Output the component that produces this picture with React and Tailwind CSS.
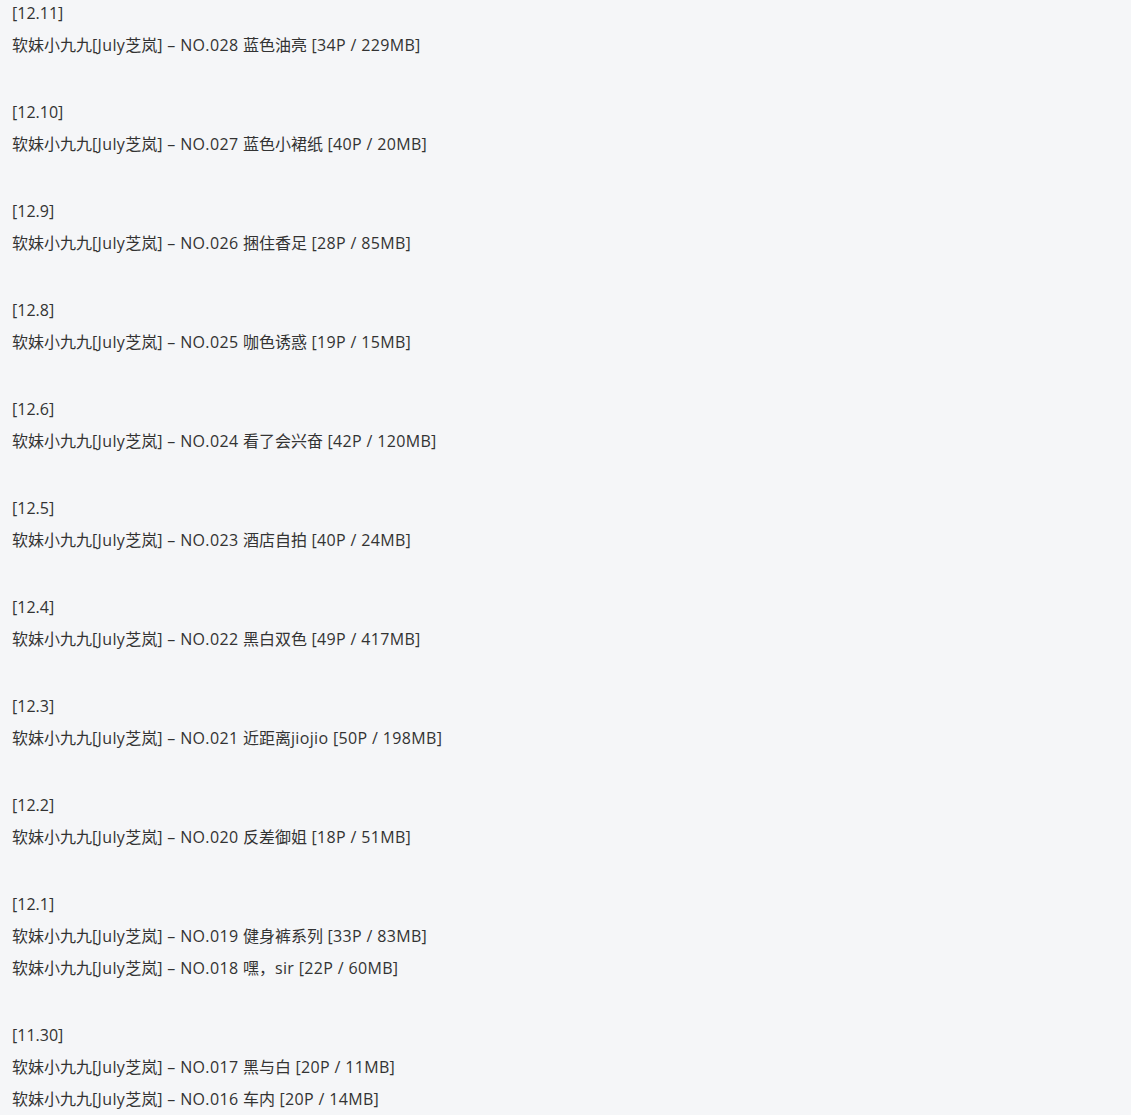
import React from "react";

const groups = [
  { date: "12.11", items: ["NO.028 蓝色油亮 [34P / 229MB]"] },
  { date: "12.10", items: ["NO.027 蓝色小裙纸 [40P / 20MB]"] },
  { date: "12.9", items: ["NO.026 捆住香足 [28P / 85MB]"] },
  { date: "12.8", items: ["NO.025 咖色诱惑 [19P / 15MB]"] },
  { date: "12.6", items: ["NO.024 看了会兴奋 [42P / 120MB]"] },
  { date: "12.5", items: ["NO.023 酒店自拍 [40P / 24MB]"] },
  { date: "12.4", items: ["NO.022 黑白双色 [49P / 417MB]"] },
  { date: "12.3", items: ["NO.021 近距离jiojio [50P / 198MB]"] },
  { date: "12.2", items: ["NO.020 反差御姐 [18P / 51MB]"] },
  { date: "12.1", items: ["NO.019 健身裤系列 [33P / 83MB]", "NO.018 嘿，sir [22P / 60MB]"] },
  { date: "11.30", items: ["NO.017 黑与白 [20P / 11MB]", "NO.016 车内 [20P / 14MB]"] },
];

// latin runs get a little extra spacing, CJK runs stay at 16px per glyph
const Mixed = ({ text }) =>
  text.split(/([\u3000-\u9fff\uff00-\uffef]+)/).map((part, i) =>
    /[\u3000-\u9fff\uff00-\uffef]/.test(part) ? (
      <span key={i}>{part}</span>
    ) : (
      <span key={i} className="tracking-[0.35px]">{part}</span>
    )
  );

const App = () => {
  return (
    <div
      className="min-h-screen bg-[#f5f6f8] text-[#333] text-[16px] leading-[32px] px-3 -mt-[3px]"
      style={{ fontFamily: '"Open Sans", "Noto Sans CJK SC", sans-serif' }}
    >
      {groups.map((g) => (
        <p key={g.date} className="mb-[35px]">
          [{g.date}]
          {g.items.map((it) => (
            <React.Fragment key={it}>
              <br />
              <Mixed text={`软妹小九九[July芝岚] – ${it}`} />
            </React.Fragment>
          ))}
        </p>
      ))}
    </div>
  );
};

export default App;
